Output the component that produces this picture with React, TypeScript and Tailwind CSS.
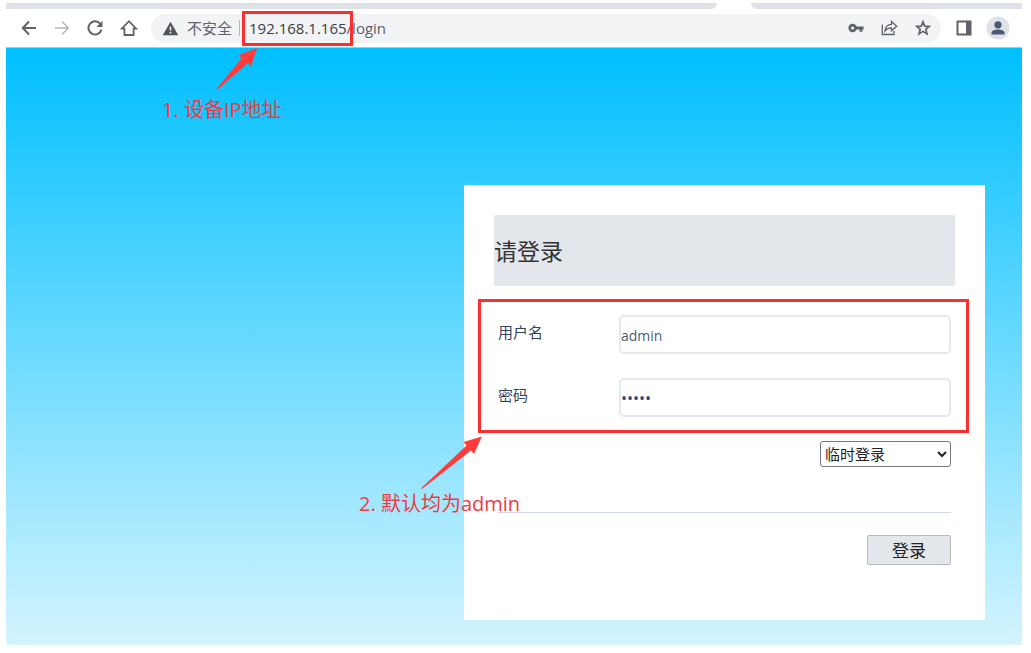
import { useState } from 'react';

const BrowserBar: React.FC = () => {
    return (
        <header className="border-b border-[#a9c9d6] bg-white">
            <div className="flex h-[6px] bg-white">
                <div className="grow-[711] basis-0 rounded-br-md bg-[#dee1e6]" />
                <div className="w-[34px]" />
                <div className="grow-[271] basis-0 rounded-bl-md bg-[#dee1e6]" />
            </div>

            <div className="flex h-[38px] items-center pr-3 pl-[15px]">
                <nav className="flex items-center gap-[17px] text-[#5f6368]">
                    <button type="button" aria-label="Back">
                        <svg width="16" height="16" viewBox="0 0 16 16" fill="none" stroke="currentColor" strokeWidth="2">
                            <path d="M15 8H2M8 1.5L1.8 8L8 14.5" />
                        </svg>
                    </button>
                    <button type="button" aria-label="Forward" className="text-[#b4b6b8]">
                        <svg width="16" height="16" viewBox="0 0 16 16" fill="none" stroke="currentColor" strokeWidth="1.6">
                            <path d="M1 8H14M8 1.5L14.2 8L8 14.5" />
                        </svg>
                    </button>
                    <button type="button" aria-label="Reload">
                        <svg width="16" height="16" viewBox="0 0 16 16">
                            <path d="M13 3.5A6.6 6.6 0 1 0 14.5 9.5" fill="none" stroke="currentColor" strokeWidth="2" />
                            <path d="M15.500 .8V7H9.300z" fill="currentColor" />
                        </svg>
                    </button>
                    <button type="button" aria-label="Home">
                        <svg width="18" height="18" viewBox="0 0 18 18" fill="none" stroke="currentColor" strokeWidth="1.8">
                            <path d="M1.8 9.6L9 2.200L16.200 9.600H13.600V16H4.400V9.600z" />
                        </svg>
                    </button>
                </nav>

                <div className="ml-[13px] flex h-[29px] flex-1 items-center rounded-full bg-[#f1f3f4] pr-[10px] pl-[11px] text-[15px] text-[#5f6368]">
                    <svg width="17" height="15" viewBox="0 0 17 15" className="mr-2">
                        <path d="M8.5 .8L16.3 14.2H.7z" fill="#505458" />
                        <path d="M8.5 5.4V9.6M8.5 10.8V12.4" stroke="#f1f3f4" strokeWidth="1.6" />
                    </svg>
                    <span>不安全</span>
                    <span className="ml-[7px] h-4 w-px bg-[#b4b7ba]" />
                    <span className="relative ml-[9px] text-[#3c4043]">
                        192.168.1.165
                        <span className="absolute -top-[6px] -left-[7px] h-[35px] w-[111px] border-3 border-[#fb2f2f]" />
                        <svg className="absolute top-[30px] -left-[33px]" width="44" height="44" viewBox="0 0 44 44">
                            <path d="M41 1L35 19.500L32 16L1.500 42.500L.7 41.700L25.500 11.500L22.500 8z" fill="#ff3b3b" />
                        </svg>
                        <span className="absolute top-[79px] -left-[87px] text-xl whitespace-nowrap text-[#ee3b42]">1. 设备IP地址</span>
                    </span>
                    <span>/login</span>

                    <div className="ml-auto flex items-center gap-[17px]">
                        <button type="button" aria-label="Passwords">
                            <svg width="16" height="12" viewBox="0 0 16 12" fill="none" stroke="currentColor">
                                <circle cx="4.6" cy="6" r="2.9" strokeWidth="2.6" />
                                <path d="M7.5 6H15.6M13 6V9.8" strokeWidth="2.8" />
                            </svg>
                        </button>
                        <button type="button" aria-label="Share">
                            <svg width="17" height="16" viewBox="0 0 17 16" fill="none" stroke="currentColor" strokeWidth="1.3">
                                <path d="M1.3 4.5V14.5H13V11" />
                                <path d="M4 11C4.4 6.7 7 4.5 10.5 4.4V1.5L15.7 6.2L10.5 10.8V7.8C7.7 7.8 5.5 8.8 4 11z" />
                            </svg>
                        </button>
                        <button type="button" aria-label="Bookmark">
                            <svg width="16" height="16" viewBox="0 0 16 16" fill="none" stroke="currentColor" strokeWidth="1.7">
                                <path d="M8 1.8L9.7 6.1L14.3 6.4L10.8 9.3L12 13.9L8 11.4L4 13.9L5.2 9.3L1.7 6.4L6.3 6.1z" />
                            </svg>
                        </button>
                    </div>
                </div>

                <button type="button" aria-label="Side panel" className="ml-[15px] text-[#5f6368]">
                    <svg width="16" height="16" viewBox="0 0 16 16">
                        <path d="M1.5 1.5H14.5V14.5H1.5z" fill="none" stroke="currentColor" strokeWidth="2" />
                        <path d="M10 1H15V15H10z" fill="currentColor" />
                    </svg>
                </button>
                <button type="button" aria-label="Profile" className="ml-[14px]">
                    <svg width="24" height="24" viewBox="0 0 24 24">
                        <circle cx="12" cy="12" r="11.5" fill="#dee1e6" />
                        <circle cx="12" cy="8.8" r="3.6" fill="#4a5874" />
                        <path d="M5.5 18.5V17C5.5 14.5 9 13.6 12 13.6S18.5 14.5 18.5 17V18.5z" fill="#4a5874" />
                    </svg>
                </button>
            </div>
        </header>
    );
};

const LoginForm: React.FC = () => {
    const [username, setUsername] = useState('admin');
    const [password, setPassword] = useState('admin');
    const [mode, setMode] = useState('temporary');

    const handleSubmit = (e: React.FormEvent) => {
        e.preventDefault();
    };

    return (
        <form onSubmit={handleSubmit} className="ml-auto w-full max-w-[521px] bg-white px-[30px] pt-[30px] pb-[55px]">
            <h1 className="flex h-[71px] items-center rounded-xs bg-[#e3e6eb] pt-px text-[23px] text-[#333]">请登录</h1>

            <div className="relative px-1 pt-[29px] text-[15px] text-[#34435e]">
                <div className="mb-6 flex items-center">
                    <label htmlFor="username" className="w-[121px] pb-1">用户名</label>
                    <input
                        type="text"
                        id="username"
                        name="username"
                        value={username}
                        onChange={(e) => setUsername(e.target.value)}
                        className="h-[39px] min-w-0 flex-1 rounded-[5px] border-2 border-[#e3e8f1] pt-[2px] text-sm text-[#4b6078]"
                    />
                </div>

                <div className="flex items-center">
                    <label htmlFor="password" className="w-[121px] pb-1">密码</label>
                    <input
                        type="password"
                        id="password"
                        name="password"
                        value={password}
                        onChange={(e) => setPassword(e.target.value)}
                        className="h-[39px] min-w-0 flex-1 rounded-[5px] border-2 border-[#e3e8f1] text-base text-[#2d4a74]"
                    />
                </div>

                <div className="pointer-events-none absolute top-[13px] -right-[14px] -left-4 h-[134px] border-3 border-[#fb2f2f]">
                    <svg className="absolute top-[133px] -left-[61px]" width="64" height="56" viewBox="0 0 64 56">
                        <path d="M62 1.500L54 19L51 15.500L2 54L1.200 53.200L46.500 10.500L43.500 7z" fill="#ff3b3b" />
                    </svg>
                    <span className="absolute top-[188px] -left-[122px] text-xl whitespace-nowrap text-[#ee3b42]">2. 默认均为admin</span>
                </div>
            </div>

            <div className="mx-1 mt-6 flex h-[72px] items-start justify-end border-b border-[#cfd9e8]">
                <select
                    aria-label="登录方式"
                    value={mode}
                    onChange={(e) => setMode(e.target.value)}
                    className="h-[26px] w-[131px] rounded-[3px] border border-[#767676] bg-white text-[15px] text-[#222]"
                >
                    <option value="temporary">临时登录</option>
                </select>
            </div>

            <div className="mt-[22px] mr-1 flex justify-end">
                <button
                    type="submit"
                    className="h-[30px] w-[84px] rounded-xs border border-[#b5b8be] bg-[#e3e6eb] pt-[2px] text-[17px] leading-6 text-[#222]"
                >
                    登录
                </button>
            </div>
        </form>
    );
};

const App: React.FC = () => {
    return (
        <div className="bg-white pt-[3px] pr-[9px] pb-2 pl-[6px] font-['Open_Sans','Noto_Sans_CJK_SC',sans-serif]">
            <BrowserBar />
            <main className="bg-linear-to-b/srgb from-[#00bfff] to-[#d4f4ff] pt-[137px] pr-[37px] pb-[25px] pl-[37px]">
                <LoginForm />
            </main>
        </div>
    );
};

export default App;
